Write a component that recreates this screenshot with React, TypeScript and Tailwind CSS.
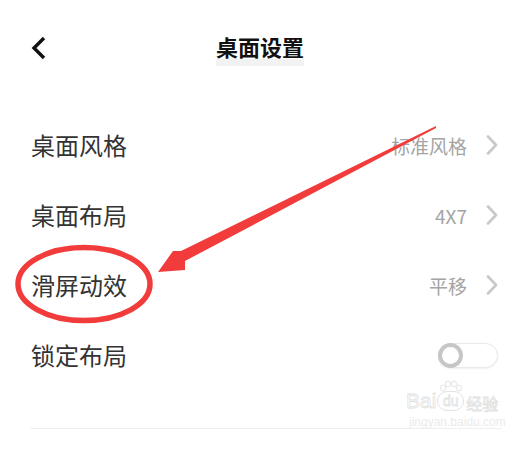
import React from 'react';

const font = { fontFamily: '"Noto Sans CJK SC", "Noto Sans", sans-serif' };

type Row = { label: string; value?: string; toggle?: boolean };

const rows: Row[] = [
  { label: '桌面风格', value: '标准风格' },
  { label: '桌面布局', value: '4X7' },
  { label: '滑屏动效', value: '平移' },
  { label: '锁定布局', toggle: true },
];

function Chevron() {
  return (
    <svg width="12" height="20" viewBox="0 0 12 20" className="ml-[19px] shrink-0">
      <path d="M2 1.5 L10 10 L2 18.5" fill="none" stroke="#c9c9c9" strokeWidth="2.6" strokeLinecap="round" strokeLinejoin="round" />
    </svg>
  );
}

function Toggle() {
  return (
    <div className="w-[60px] h-[25px] rounded-full border border-[#e9e9e9] bg-white shadow-[0_1px_2px_rgba(0,0,0,0.06)] flex items-center">
      <div className="w-[25px] h-[25px] -ml-px rounded-full border-[4px] border-[#c6c6c6] bg-white" />
    </div>
  );
}

export default function App() {
  return (
    <div className="relative w-[532px] h-[450px] bg-white overflow-hidden" style={font}>
      {/* Header */}
      <div className="h-[96px] flex items-center px-[31px]">
        <svg width="16" height="24" viewBox="0 0 16 24" className="shrink-0">
          <path d="M13 2 L3 12 L13 22" fill="none" stroke="#111" strokeWidth="3.4" strokeLinejoin="miter" />
        </svg>
        <div className="flex-1 flex justify-center pr-[28px]">
          <div className="relative">
            <span className="text-[22px] font-bold text-[#111] leading-none">桌面设置</span>
            <div className="absolute left-0 right-0 top-[24px] h-[7px] bg-[#f2f2f2]" />
          </div>
        </div>
      </div>

      {/* List */}
      <div className="mt-[14px]">
        {rows.map((r) => (
          <div key={r.label} className="h-[70px] flex items-center pl-[31px] pr-[34px]">
            <span className="text-[24px] text-[#333] leading-none">{r.label}</span>
            <div className="ml-auto flex items-center">
              {r.toggle ? (
                <Toggle />
              ) : (
                <>
                  <span className="text-[19px] text-[#a4a4a4] leading-none">{r.value}</span>
                  <Chevron />
                </>
              )}
            </div>
          </div>
        ))}
      </div>

      <div className="mt-[38px] mx-[30px] h-px bg-[#efefef]" />

      {/* Watermark */}
      <div className="absolute left-[406px] top-[390px] flex flex-col items-start select-none">
        <div className="flex items-end">
          <span className="text-[21px] leading-none text-transparent [-webkit-text-stroke:0.8px_#e2e2e2]" style={{ fontFamily: '"Liberation Sans", sans-serif' }}>Bai</span>
          <div className="relative ml-[1px] w-[27px] h-[20px] rounded-full border border-[#e2e2e2] flex items-center justify-center">
            <span className="text-[14px] leading-none text-transparent [-webkit-text-stroke:0.8px_#e2e2e2]" style={{ fontFamily: '"Liberation Sans", sans-serif' }}>du</span>
            <svg width="24" height="12" viewBox="0 0 24 12" className="absolute -top-[12px] left-[1px]">
              <g fill="none" stroke="#e4e4e4" strokeWidth="1">
                <ellipse cx="4" cy="8" rx="2.5" ry="3" />
                <ellipse cx="9" cy="4" rx="2.5" ry="3" />
                <ellipse cx="15" cy="4" rx="2.5" ry="3" />
                <ellipse cx="20" cy="8" rx="2.5" ry="3" />
              </g>
            </svg>
          </div>
          <span className="ml-[2px] text-[16px] leading-none text-transparent [-webkit-text-stroke:0.8px_#e2e2e2]">经验</span>
        </div>
        <span className="mt-[5px] ml-[3px] text-[12px] leading-none text-[#ebebeb]" style={{ fontFamily: '"Liberation Sans", sans-serif' }}>jingyan.baidu.com</span>
      </div>

      {/* Red annotation */}
      <svg className="absolute inset-0 pointer-events-none" width="532" height="450" viewBox="0 0 532 450">
        <ellipse cx="84" cy="284" rx="66" ry="36.5" fill="none" stroke="#f23b3b" strokeWidth="5.5" />
        <polygon points="436,126 181,251 173,251 158,272 185,270 185,261 436,128" fill="#f23b3b" />
      </svg>
    </div>
  );
}
